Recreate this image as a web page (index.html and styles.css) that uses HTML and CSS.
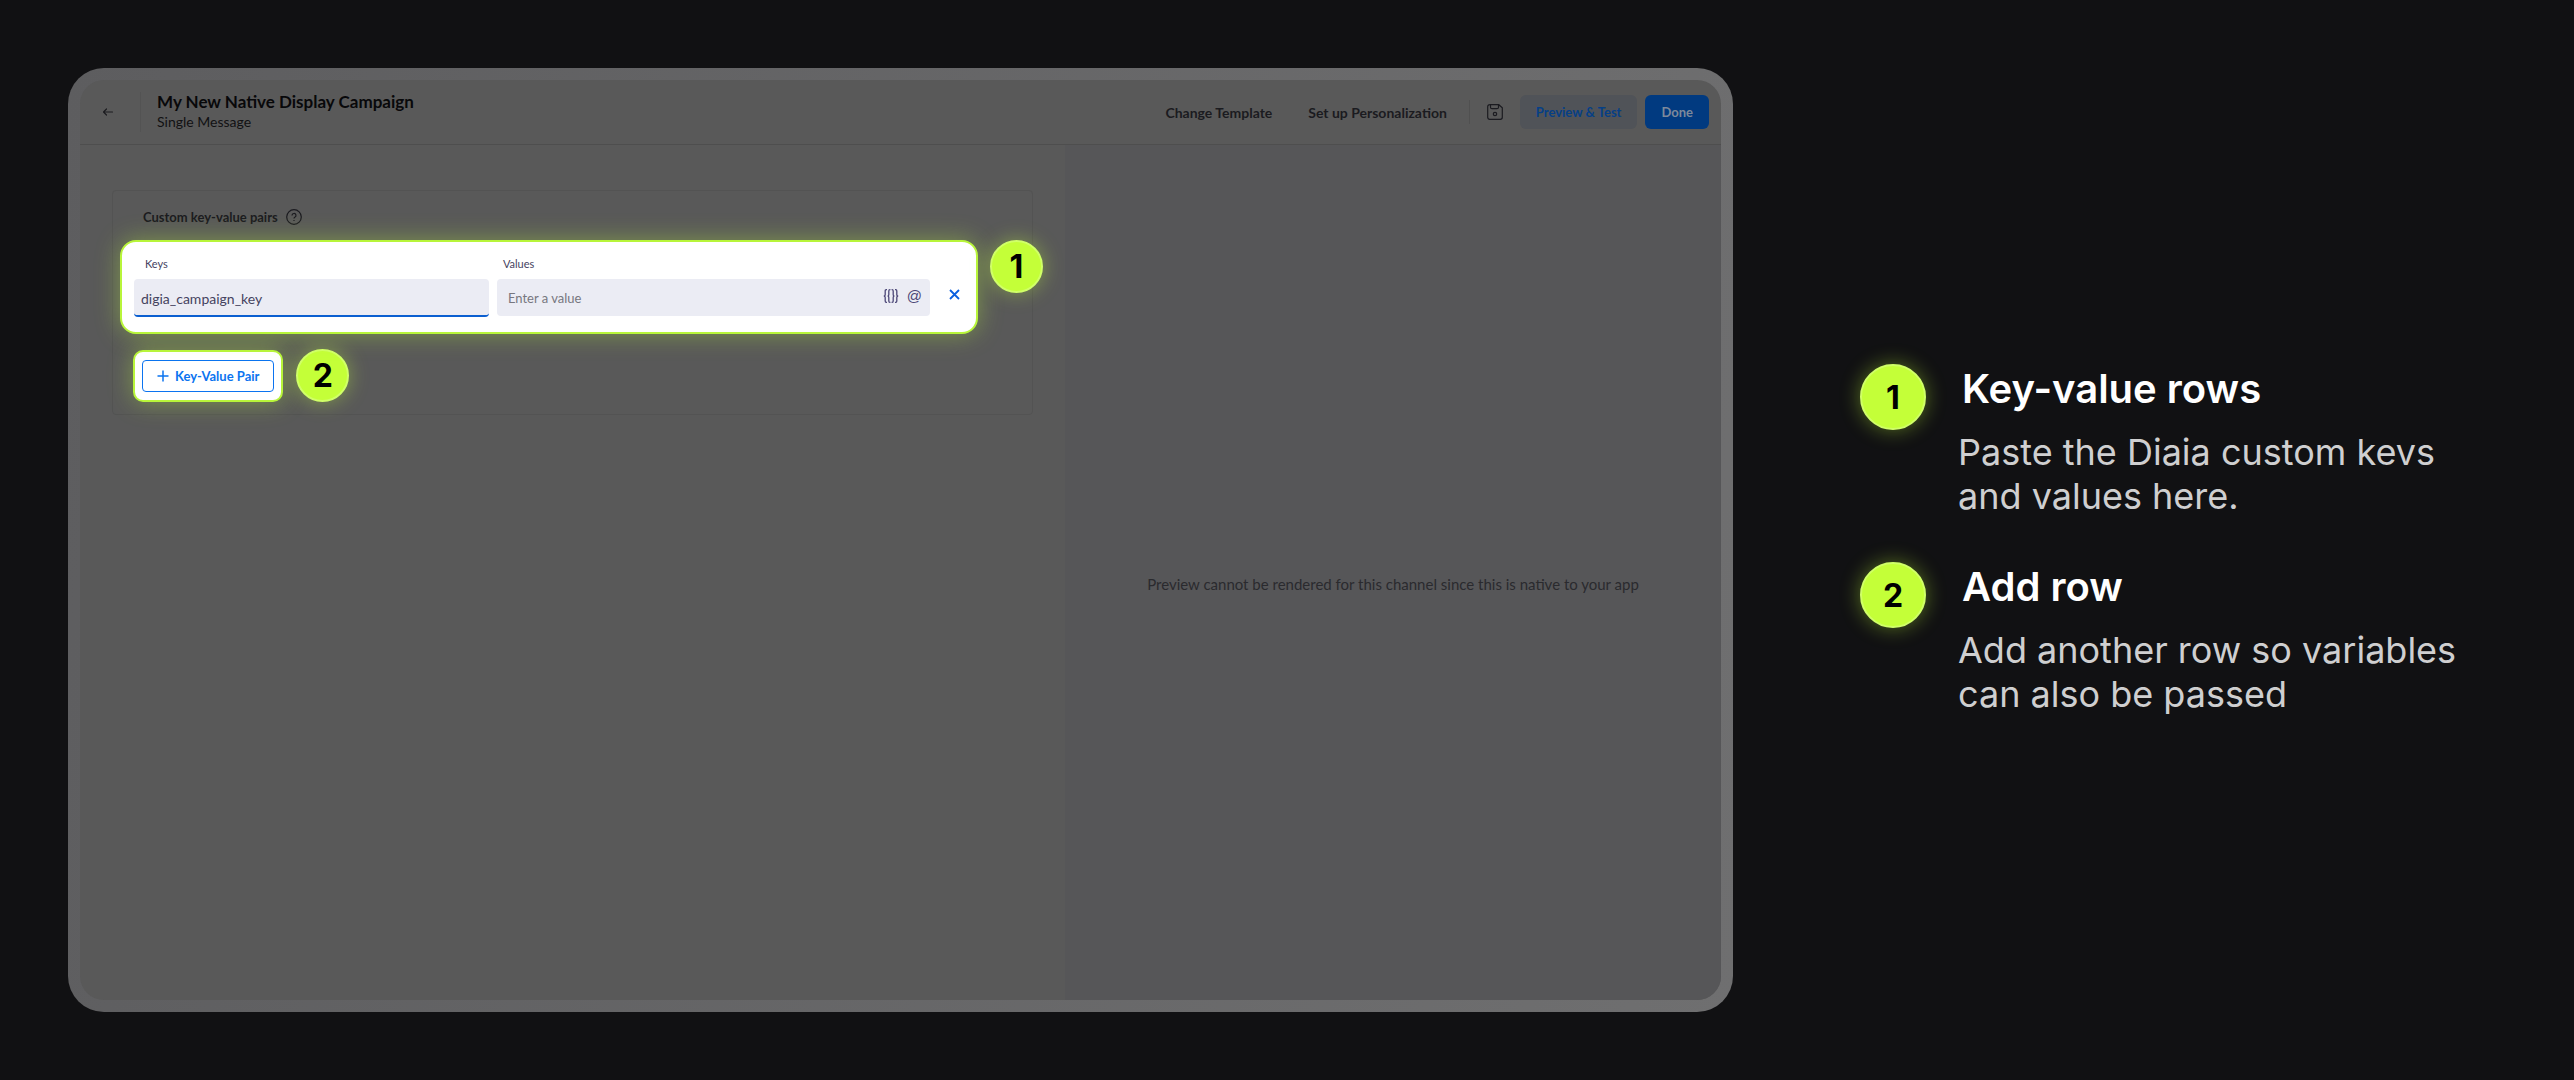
FILE: index.html
```html
<!DOCTYPE html>
<html lang="en">

<head>
    <meta charset="UTF-8">
    <meta name="viewport" content="width=device-width, initial-scale=1.0">
    <title>My New Native Display Campaign</title>
    <link rel="stylesheet" href="styles.css">
</head>

<body>
    <main class="stage">
        <div class="frame">
            <div class="window">
                <header class="topbar">
                    <button class="back" type="button" aria-label="Back">
                        <svg width="12" height="10" viewBox="0 0 12 10" fill="none" stroke="currentColor" stroke-width="1.200">
                            <path d="M4.500 2 1.500 5l3 3M1.500 5H10.500" stroke-linecap="round" stroke-linejoin="round" />
                        </svg>
                    </button>
                    <div class="heading">
                        <h1 class="title">My New Native Display Campaign</h1>
                        <div class="subtitle">Single Message</div>
                    </div>
                    <div class="actions">
                        <button class="btn" type="button">Change Template</button>
                        <button class="btn" type="button">Set up Personalization</button>
                        <button class="btn-icon" type="button" aria-label="Save">
                            <svg width="16" height="16" viewBox="0 0 16 16" fill="none" stroke="currentColor" stroke-width="1.200">
                                <path d="M2.500 .7h9.300l3.500 3v9.600a2 2 0 0 1-2 2H2.700a2 2 0 0 1-2-2V2.700a2 2 0 0 1 2-2z" />
                                <path d="M3.500 .7v2.500a1.500 1.500 0 0 0 1.500 1.500h5a1.500 1.500 0 0 0 1.500-1.500V.7" />
                                <circle cx="8" cy="10" r="1.700" />
                            </svg>
                        </button>
                        <button class="btn btn-soft" type="button">Preview &amp; Test</button>
                        <button class="btn btn-primary" type="button">Done</button>
                    </div>
                </header>

                <div class="panes">
                    <section class="editor">
                        <div class="card">
                            <h2 class="card-title">
                                Custom key-value pairs
                                <svg width="16" height="16" viewBox="0 0 16 16" fill="none" stroke="currentColor" stroke-width="1.200">
                                    <circle cx="8" cy="8" r="7.300" />
                                    <path d="M6 6.500a2 2 0 1 1 2.800 1.800c-.6.3-.8.600-.8 1.200M8 11v1" />
                                </svg>
                            </h2>

                            <div class="pair spot">
                                <div class="field">
                                    <label for="key">Keys</label>
                                    <input class="input input-active" id="key" type="text" value="digia_campaign_key">
                                </div>
                                <div class="field field-value">
                                    <label for="value">Values</label>
                                    <div class="input-wrap">
                                        <input class="input" id="value" type="text" placeholder="Enter a value">
                                        <div class="input-tools">
                                            <button type="button" aria-label="Insert variable">
                                                <svg width="16" height="14" viewBox="0 0 16 14" fill="none" stroke="currentColor" stroke-width="1.300">
                                                    <path d="M4 .7H3.300Q2.200 .7 2.200 2v3.500Q2.200 7 .8 7q1.400 0 1.400 1.500V12q0 1.300 1.100 1.300H4M7.400 .7H6.900Q5.800 .7 5.800 2v3.500Q5.800 7 4.600 7q1.200 0 1.200 1.500V12q0 1.300 1.100 1.300h.5M8.600 .7h.5q1.100 0 1.100 1.300v3.500q0 1.500 1.200 1.500-1.200 0-1.200 1.500V12q0 1.300-1.100 1.300h-.5M12 .7h.7q1.100 0 1.100 1.300v3.500q0 1.500 1.400 1.500-1.400 0-1.400 1.500V12q0 1.300-1.100 1.300H12" />
                                                </svg>
                                            </button>
                                            <button class="mention" type="button" aria-label="Mention">@</button>
                                        </div>
                                    </div>
                                </div>
                                <button class="remove" type="button" aria-label="Remove pair">
                                    <svg width="11" height="11" viewBox="0 0 11 11" stroke="currentColor" stroke-width="1.800">
                                        <path d="M1 1l9 9M10 1l-9 9" />
                                    </svg>
                                </button>
                                <span class="badge badge-side">1</span>
                            </div>

                            <div class="add-row">
                                <div class="spot add-spot">
                                    <button class="add" type="button">
                                        <svg width="12" height="12" viewBox="0 0 12 12" stroke="currentColor" stroke-width="1.500">
                                            <path d="M6 .5v11M.5 6h11" />
                                        </svg>
                                        Key-Value Pair
                                    </button>
                                </div>
                                <span class="badge">2</span>
                            </div>
                        </div>
                    </section>

                    <section class="preview">
                        <p>Preview cannot be rendered for this channel since this is native to your app</p>
                    </section>
                </div>
            </div>
        </div>

        <aside class="legend">
            <div class="note">
                <span class="badge badge-large">1</span>
                <div class="note-text">
                    <h2>Key-value rows</h2>
                    <p>Paste the Diaia custom kevs and values here.</p>
                </div>
            </div>
            <div class="note">
                <span class="badge badge-large">2</span>
                <div class="note-text">
                    <h2>Add row</h2>
                    <p>Add another row so variables can also be passed</p>
                </div>
            </div>
        </aside>
    </main>
</body>

</html>
```
FILE: styles.css
```css
:root {
    --page: #111113;
    --window: #595959;
    --window-side: #565658;
    --line: #4e4e4e;
    --lime: #c4ff38;
    --lime-edge: #b8f53a;
    --ink: #1b1b20;
    --field: #ebecf4;
    --field-text: #45435f;
    --blue: #0b74f0;
}

* {
    box-sizing: border-box;
}

body {
    margin: 0;
    background: var(--page);
    font-family: Lato, "Liberation Sans", sans-serif;
    color: var(--ink);
}

h1,
h2,
p {
    margin: 0;
}

button,
input {
    font: inherit;
    color: inherit;
    border: 0;
    background: none;
    padding: 0;
}

button {
    display: flex;
    align-items: center;
    justify-content: center;
    cursor: pointer;
}

svg {
    display: block;
    flex: none;
}

.stage {
    display: grid;
    grid-template-columns: minmax(0, 1fr) 646px;
    gap: 127px;
    min-height: 100vh;
    padding: 68px;
}

/* window */

.frame {
    display: flex;
    padding: 12px;
    border-radius: 36px;
    background: linear-gradient(100deg, #5d5d5f, #6f6f70);
}

.window {
    flex: 1;
    display: flex;
    flex-direction: column;
    border-radius: 24px;
    overflow: hidden;
    background: var(--window);
}

.topbar {
    display: flex;
    align-items: center;
    height: 65px;
    padding: 0 12px 0 20px;
    border-bottom: 1px solid var(--line);
}

.back {
    width: 16px;
    height: 32px;
    color: #1c1c20;
}

.heading {
    margin-left: 24px;
    padding-left: 16px;
    border-left: 1px solid #535353;
}

.title {
    font-size: 17px;
    line-height: 20px;
    font-weight: 700;
    color: #08080a;
}

.subtitle {
    font-size: 14px;
    line-height: 20px;
    color: #111113;
}

.actions {
    display: flex;
    align-items: center;
    gap: 8px;
    margin-left: auto;
}

.btn {
    height: 34px;
    padding: 0 14px;
    border-radius: 6px;
    font-size: 14px;
    font-weight: 700;
    white-space: nowrap;
}

.btn-icon {
    width: 51px;
    height: 24px;
    margin-right: -8px;
    border-left: 1px solid #505050;
}

.btn-soft,
.btn-primary {
    padding: 0 16px;
    font-size: 13px;
}

.btn-soft {
    background: #505358;
    color: #063f86;
}

.btn-primary {
    background: #013a80;
    color: #7d899b;
}

.panes {
    flex: 1;
    display: grid;
    grid-template-columns: 985fr 656fr;
}

.editor {
    padding: 45px 32px;
}

.preview {
    display: flex;
    justify-content: center;
    padding: 427px 16px 16px;
    background: var(--window-side);
    font-size: 15px;
    line-height: 24px;
    color: #2a2a2e;
}

.card {
    padding: 16px 54px 12px 7px;
    border: 1px solid #535353;
    border-radius: 4px;
}

.card-title {
    display: flex;
    align-items: center;
    gap: 8px;
    padding-left: 23px;
    font-size: 13px;
    line-height: 20px;
    font-weight: 700;
}

/* highlighted areas */

.spot {
    border: 2px solid var(--lime-edge);
    background: #ffffff;
    box-shadow: 0 0 24px rgba(184, 245, 58, 0.4);
}

.pair {
    position: relative;
    display: flex;
    height: 94px;
    margin-top: 13px;
    padding: 12px;
    border-radius: 16px;
}

.field {
    flex: 354;
    color: var(--field-text);
}

.field-value {
    flex: 432;
    margin-left: 8px;
}

.field label {
    display: block;
    padding-left: 11px;
    font-size: 11px;
    line-height: 20px;
}

.field-value label {
    padding-left: 6px;
}

.input {
    width: 100%;
    height: 37px;
    margin-top: 5px;
    padding: 0 11px;
    border-radius: 4px;
    background: var(--field);
    font-size: 13px;
    outline: none;
}

.input-active {
    height: 38px;
    padding: 2px 7px 0;
    border-bottom: 2px solid #0b5fd0;
    font-size: 14px;
}

.input::placeholder {
    color: #77777f;
    opacity: 1;
}

.input-wrap {
    position: relative;
}

.input-tools {
    position: absolute;
    top: 12px;
    right: 8px;
    display: flex;
    align-items: center;
    gap: 8px;
    height: 20px;
    color: #4d4878;
}

.mention {
    font-family: "Liberation Sans", sans-serif;
    font-size: 15px;
    line-height: 20px;
}

.remove {
    width: 36px;
    height: 37px;
    margin: 22px -8px 0 6px;
    color: #0a5fe0;
}

.badge {
    flex: none;
    display: flex;
    align-items: center;
    justify-content: center;
    width: 53px;
    height: 53px;
    border: 2px solid #d0ff68;
    border-radius: 50%;
    background: var(--lime);
    box-shadow: 0 0 20px rgba(196, 255, 56, 0.4);
    font-family: Inter, "Liberation Sans", sans-serif;
    font-size: 32px;
    font-weight: 700;
    color: #000000;
}

.badge-side {
    position: absolute;
    top: -2px;
    left: calc(100% + 14px);
}

.badge-large {
    width: 66px;
    height: 66px;
}

.add-row {
    display: flex;
    align-items: center;
    gap: 13px;
    margin-top: 15px;
    padding-left: 13px;
}

.add-spot {
    padding: 8px 7px;
    border-radius: 10px;
}

.add {
    gap: 6px;
    height: 32px;
    padding: 0 14px;
    border: 1px solid var(--blue);
    border-radius: 4px;
    font-size: 13px;
    font-weight: 700;
    color: var(--blue);
}

/* legend */

.legend {
    display: flex;
    flex-direction: column;
    gap: 44px;
    padding-top: 296px;
    font-family: Inter, "Liberation Sans", sans-serif;
}

.note {
    display: flex;
    gap: 32px;
}

.note-text {
    max-width: 520px;
}

.note-text h2 {
    padding-left: 4px;
    font-size: 40px;
    line-height: 50px;
    font-weight: 600;
    color: #ffffff;
}

.note-text p {
    margin-top: 16px;
    font-size: 36px;
    line-height: 44px;
    font-weight: 400;
    color: #cfcfd0;
}
```
